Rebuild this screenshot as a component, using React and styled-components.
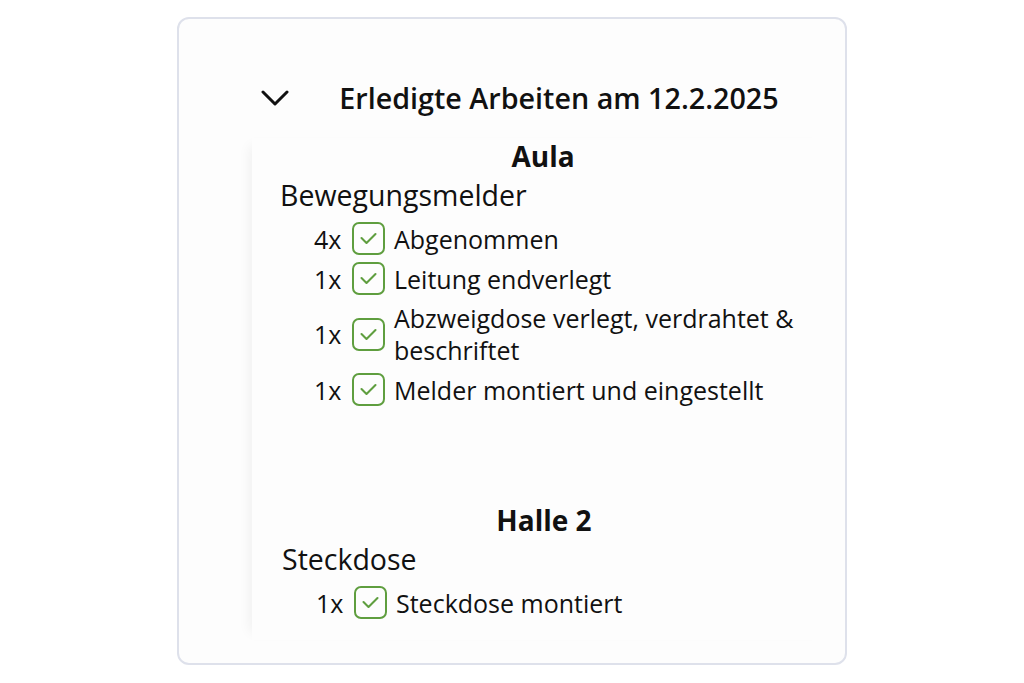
import React from "react";
import styled, { createGlobalStyle } from "styled-components";

const GlobalStyle = createGlobalStyle`
  html, body {
    margin: 0;
    padding: 0;
    background: #ffffff;
  }
  body {
    font-family: "Open Sans", "Noto Sans", "Liberation Sans", sans-serif;
    color: #111111;
  }
`;

const Page = styled.div`
  width: 1024px;
  height: 683px;
  display: flex;
  justify-content: center;
  align-items: flex-start;
  padding-top: 17px;
  box-sizing: border-box;
`;

const Card = styled.section`
  width: 670px;
  height: 648px;
  box-sizing: border-box;
  border: 2px solid #dee1eb;
  border-radius: 12px;
  background: #fdfdfd;
  display: flex;
  flex-direction: column;
  overflow: hidden;
`;

const Header = styled.header`
  display: flex;
  align-items: center;
  justify-content: center;
  gap: 50px;
  padding: 61px 0 0 16px;
  height: 36px;
`;

const Chevron = styled.svg`
  width: 28px;
  height: 18px;
  flex: none;
`;

const Title = styled.h2`
  margin: 0;
  font-size: 28.7px;
  font-weight: 600;
  line-height: 36px;
  white-space: nowrap;
`;

const Panel = styled.div`
  margin: 22px 11px 0 73px;
  height: 502px;
  overflow: hidden;
  background: #fdfdfd;
  box-shadow: -10px 0 12px -8px rgba(0, 0, 0, 0.06);
`;

const Section = styled.div`
  padding-left: ${(p) => p.$shift || 0}px;
  & + & {
    margin-top: 96px;
  }
`;

const Place = styled.h3`
  margin: 0;
  text-align: center;
  font-size: 28px;
  font-weight: 700;
  line-height: 36px;
`;

const Device = styled.div`
  padding-left: 28px;
  font-size: 28.5px;
  line-height: 38px;
  margin-top: 2px;
`;

const ItemList = styled.ul`
  list-style: none;
  margin: 8px 0 0;
  padding: 0 0 0 62px;
  display: flex;
  flex-direction: column;
  gap: 7px;
`;

const Item = styled.li`
  display: flex;
  align-items: center;
  min-height: 33px;
  font-size: 25px;
  line-height: 32px;
`;

const Qty = styled.span`
  flex: none;
  width: 38px;
`;

const CheckBox = styled.span`
  flex: none;
  width: 33px;
  height: 33px;
  box-sizing: border-box;
  border: 2px solid #5f9e3f;
  border-radius: 7px;
  display: flex;
  align-items: center;
  justify-content: center;
  margin-right: 9px;
`;

const ItemText = styled.span`
  flex: 1;
`;

const sections = [
  {
    place: "Aula",
    device: "Bewegungsmelder",
    shift: 0,
    items: [
      ["4x", "Abgenommen"],
      ["1x", "Leitung endverlegt"],
      ["1x", "Abzweigdose verlegt, verdrahtet & beschriftet"],
      ["1x", "Melder montiert und eingestellt"],
    ],
  },
  {
    place: "Halle 2",
    device: "Steckdose",
    shift: 2,
    items: [["1x", "Steckdose montiert"]],
  },
];

function Check() {
  return (
    <CheckBox>
      <svg width="17" height="13" viewBox="0 0 17 13" fill="none">
        <polyline
          points="1.5,6 6.5,11 15.5,2"
          stroke="#5f9e3f"
          strokeWidth="2.1"
          strokeLinecap="round"
          strokeLinejoin="round"
        />
      </svg>
    </CheckBox>
  );
}

export default function App() {
  return (
    <>
      <GlobalStyle />
      <Page>
        <Card>
          <Header>
            <Chevron viewBox="0 0 28 18" fill="none">
              <polyline
                points="2,3 14,15 26,3"
                stroke="#111"
                strokeWidth="3"
                strokeLinecap="round"
                strokeLinejoin="round"
              />
            </Chevron>
            <Title>Erledigte Arbeiten am 12.2.2025</Title>
          </Header>
          <Panel>
            {sections.map((s) => (
              <Section key={s.place} $shift={s.shift}>
                <Place>{s.place}</Place>
                <Device>{s.device}</Device>
                <ItemList>
                  {s.items.map(([qty, text]) => (
                    <Item key={text}>
                      <Qty>{qty}</Qty>
                      <Check />
                      <ItemText>{text}</ItemText>
                    </Item>
                  ))}
                </ItemList>
              </Section>
            ))}
          </Panel>
        </Card>
      </Page>
    </>
  );
}
